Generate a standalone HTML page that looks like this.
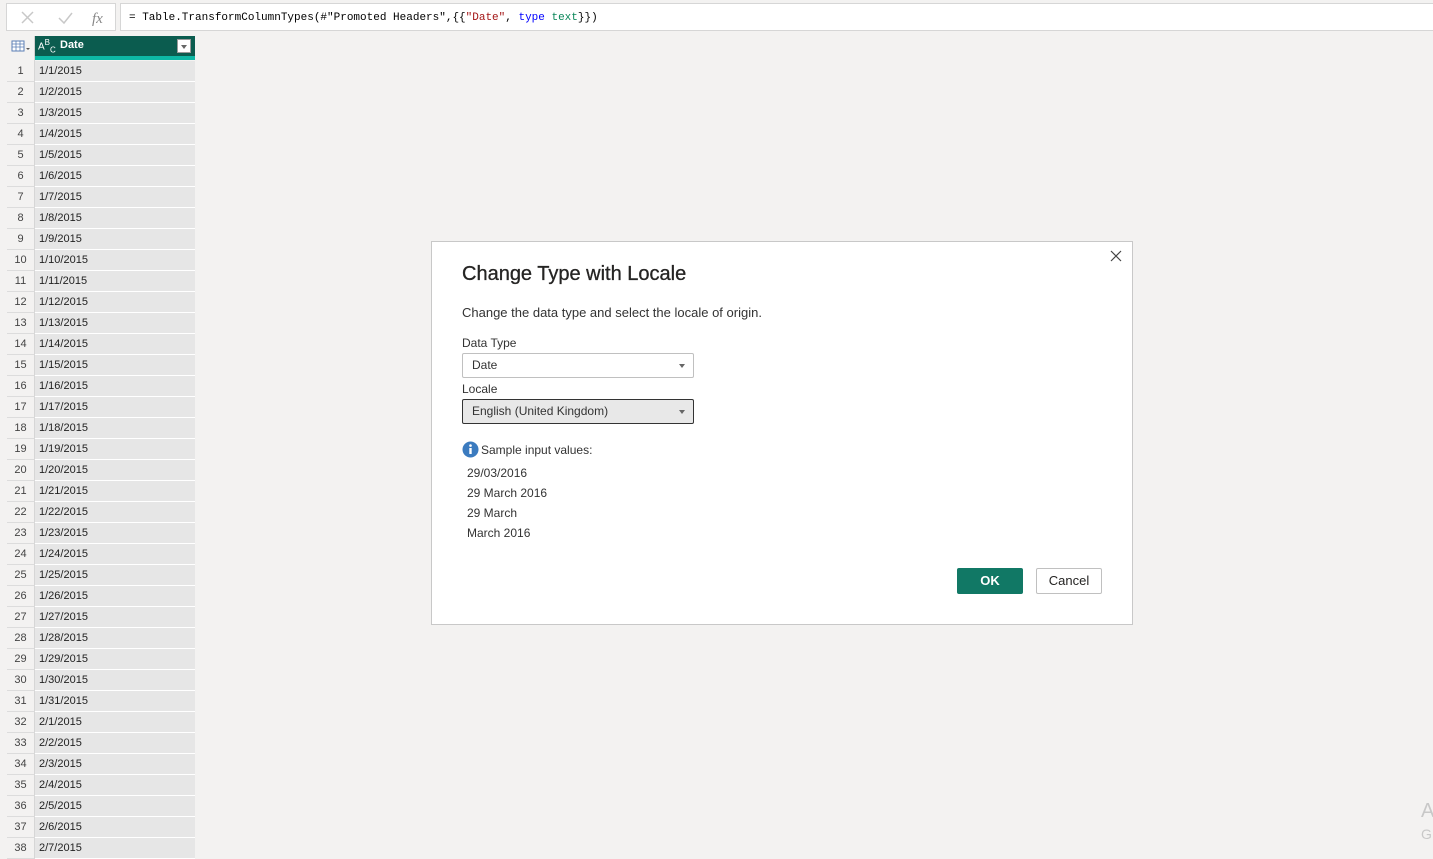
<!DOCTYPE html>
<html><head><meta charset="utf-8"><style>
*{margin:0;padding:0;box-sizing:border-box}
body{width:1433px;height:853px;overflow:hidden;background:#f3f2f1;font-family:"Liberation Sans",sans-serif;position:relative;font-size:11px;color:#252423}
.fb{position:absolute;left:120px;top:3px;width:1320px;height:28px;background:#fff;border:1px solid #d6d6d6;font-family:"Liberation Mono",monospace;font-size:11px;line-height:28px;padding-left:8px;color:#000}
.btns{position:absolute;left:6px;top:3px;width:110px;height:28px;background:#fff;border:1px solid #d6d6d6}
.grid{position:absolute;left:7px;top:36px;width:188px}
.hdr{height:20px;background:#0b5c4f;position:relative}
.hdr .ic{position:absolute;left:0;top:0;width:28px;height:20px;background:#f3f2f1;border-right:1px solid #d0d0d0}
.teal{position:absolute;left:28px;top:21px;width:160px;height:4px;background:#0eb8a5}
.row{height:21px;display:flex;line-height:21px}
.row .n{width:28px;text-align:center;color:#444;background:#f3f2f1;font-size:11px;border-right:1px solid #d6d6d6;border-bottom:1px solid #dcdcdc}
.row .v{flex:1;background:#e6e6e6;padding-left:4px;color:#222;border-bottom:1px solid #fff}
.dlg{position:absolute;left:431px;top:241px;width:702px;height:384px;background:#fff;border:1px solid #c8c8c8}
.lbl{position:absolute;left:30px;font-size:12px;color:#333}
.sel{position:absolute;left:30px;width:232px;height:25px;border:1px solid #c0c0c0;border-radius:2px;font-size:12px;line-height:23px;padding-left:9px;color:#333}
.sel:after{content:"";position:absolute;right:8px;top:10px;border:3px solid transparent;border-top:4px solid #666}
</style></head><body>
<div class="btns">
<svg width="110" height="28"><path d="M15 8l11 11M26 8L15 19" stroke="#c8c8c8" stroke-width="1.5"/><path d="M52 14l5 5 8-10" stroke="#c8c8c8" stroke-width="1.5" fill="none"/><text x="85" y="19" font-family="Liberation Serif" font-style="italic" font-size="15" fill="#888">fx</text></svg>
</div>
<div class="fb">= Table.TransformColumnTypes(#"Promoted Headers",{{<span style="color:#a31515">"Date"</span>, <span style="color:#0000ff">type</span> <span style="color:#098658">text</span>}})</div>
<div class="grid">
<div class="hdr"><div class="ic"><svg width="28" height="20"><rect x="5" y="5" width="12" height="10" fill="#fff" stroke="#5b7fb5"/><path d="M5 8h12M5 11h12M9 5v10M13 5v10" stroke="#5b7fb5" stroke-width=".8"/><path d="M19 12l2 2 2-2z" fill="#555"/></svg></div>
<span style="position:absolute;left:31px;top:2px;color:#fff;font-size:10px">A<sup style="font-size:8px">B</sup><sub style="font-size:8px">C</sub></span>
<span style="position:absolute;left:53px;top:3px;color:#fff;font-weight:bold;font-size:11px">Date</span>
<div style="position:absolute;left:170px;top:3px;width:14px;height:14px;background:#fff;border:1px solid #999"><div style="margin:5px 0 0 3px;border:3px solid transparent;border-top:4px solid #666;width:0"></div></div>
</div>
<div style="height:5px;position:relative"><div class="teal" style="top:0"></div><div style="position:absolute;left:0;top:0;width:28px;height:5px;border-right:1px solid #d6d6d6"></div></div>
<div class="row"><div class="n">1</div><div class="v">1/1/2015</div></div>
<div class="row"><div class="n">2</div><div class="v">1/2/2015</div></div>
<div class="row"><div class="n">3</div><div class="v">1/3/2015</div></div>
<div class="row"><div class="n">4</div><div class="v">1/4/2015</div></div>
<div class="row"><div class="n">5</div><div class="v">1/5/2015</div></div>
<div class="row"><div class="n">6</div><div class="v">1/6/2015</div></div>
<div class="row"><div class="n">7</div><div class="v">1/7/2015</div></div>
<div class="row"><div class="n">8</div><div class="v">1/8/2015</div></div>
<div class="row"><div class="n">9</div><div class="v">1/9/2015</div></div>
<div class="row"><div class="n">10</div><div class="v">1/10/2015</div></div>
<div class="row"><div class="n">11</div><div class="v">1/11/2015</div></div>
<div class="row"><div class="n">12</div><div class="v">1/12/2015</div></div>
<div class="row"><div class="n">13</div><div class="v">1/13/2015</div></div>
<div class="row"><div class="n">14</div><div class="v">1/14/2015</div></div>
<div class="row"><div class="n">15</div><div class="v">1/15/2015</div></div>
<div class="row"><div class="n">16</div><div class="v">1/16/2015</div></div>
<div class="row"><div class="n">17</div><div class="v">1/17/2015</div></div>
<div class="row"><div class="n">18</div><div class="v">1/18/2015</div></div>
<div class="row"><div class="n">19</div><div class="v">1/19/2015</div></div>
<div class="row"><div class="n">20</div><div class="v">1/20/2015</div></div>
<div class="row"><div class="n">21</div><div class="v">1/21/2015</div></div>
<div class="row"><div class="n">22</div><div class="v">1/22/2015</div></div>
<div class="row"><div class="n">23</div><div class="v">1/23/2015</div></div>
<div class="row"><div class="n">24</div><div class="v">1/24/2015</div></div>
<div class="row"><div class="n">25</div><div class="v">1/25/2015</div></div>
<div class="row"><div class="n">26</div><div class="v">1/26/2015</div></div>
<div class="row"><div class="n">27</div><div class="v">1/27/2015</div></div>
<div class="row"><div class="n">28</div><div class="v">1/28/2015</div></div>
<div class="row"><div class="n">29</div><div class="v">1/29/2015</div></div>
<div class="row"><div class="n">30</div><div class="v">1/30/2015</div></div>
<div class="row"><div class="n">31</div><div class="v">1/31/2015</div></div>
<div class="row"><div class="n">32</div><div class="v">2/1/2015</div></div>
<div class="row"><div class="n">33</div><div class="v">2/2/2015</div></div>
<div class="row"><div class="n">34</div><div class="v">2/3/2015</div></div>
<div class="row"><div class="n">35</div><div class="v">2/4/2015</div></div>
<div class="row"><div class="n">36</div><div class="v">2/5/2015</div></div>
<div class="row"><div class="n">37</div><div class="v">2/6/2015</div></div>
<div class="row"><div class="n">38</div><div class="v">2/7/2015</div></div>
</div>

<div class="dlg">
<svg style="position:absolute;right:10px;top:8px" width="12" height="12"><path d="M1 1l10 10M11 1L1 11" stroke="#444" stroke-width="1.2"/></svg>
<div style="position:absolute;left:30px;top:21px;font-size:20px;color:#252423;-webkit-text-stroke:0.3px #252423">Change Type with Locale</div>
<div class="lbl" style="top:63px;font-size:13px">Change the data type and select the locale of origin.</div>
<div class="lbl" style="top:94px">Data Type</div>
<div class="sel" style="top:111px">Date</div>
<div class="lbl" style="top:140px">Locale</div>
<div class="sel" style="top:157px;background:#e8e8e8;border-color:#333">English (United Kingdom)</div>
<svg style="position:absolute;left:30px;top:199px" width="17" height="17"><circle cx="8.5" cy="8.5" r="8" fill="#3b7bbf"/><rect x="7.3" y="7" width="2.4" height="6" fill="#fff"/><circle cx="8.5" cy="4.6" r="1.3" fill="#fff"/></svg>
<div class="lbl" style="top:201px;left:49px">Sample input values:</div>
<div class="lbl" style="top:224px;left:35px">29/03/2016</div>
<div class="lbl" style="top:244px;left:35px">29 March 2016</div>
<div class="lbl" style="top:264px;left:35px">29 March</div>
<div class="lbl" style="top:284px;left:35px">March 2016</div>
<div style="position:absolute;left:525px;top:326px;width:66px;height:26px;background:#117865;border-radius:2px;color:#fff;font-weight:bold;font-size:13px;text-align:center;line-height:26px">OK</div>
<div style="position:absolute;left:604px;top:326px;width:66px;height:26px;background:#fff;border:1px solid #c0c0c0;border-radius:2px;color:#252423;font-size:13px;text-align:center;line-height:24px">Cancel</div>
</div>
<div style="position:absolute;left:1421px;top:800px;font-size:20px;color:#c8c8c8">A</div>
<div style="position:absolute;left:1421px;top:826px;font-size:14px;color:#c8c8c8">G</div>
</body></html>
